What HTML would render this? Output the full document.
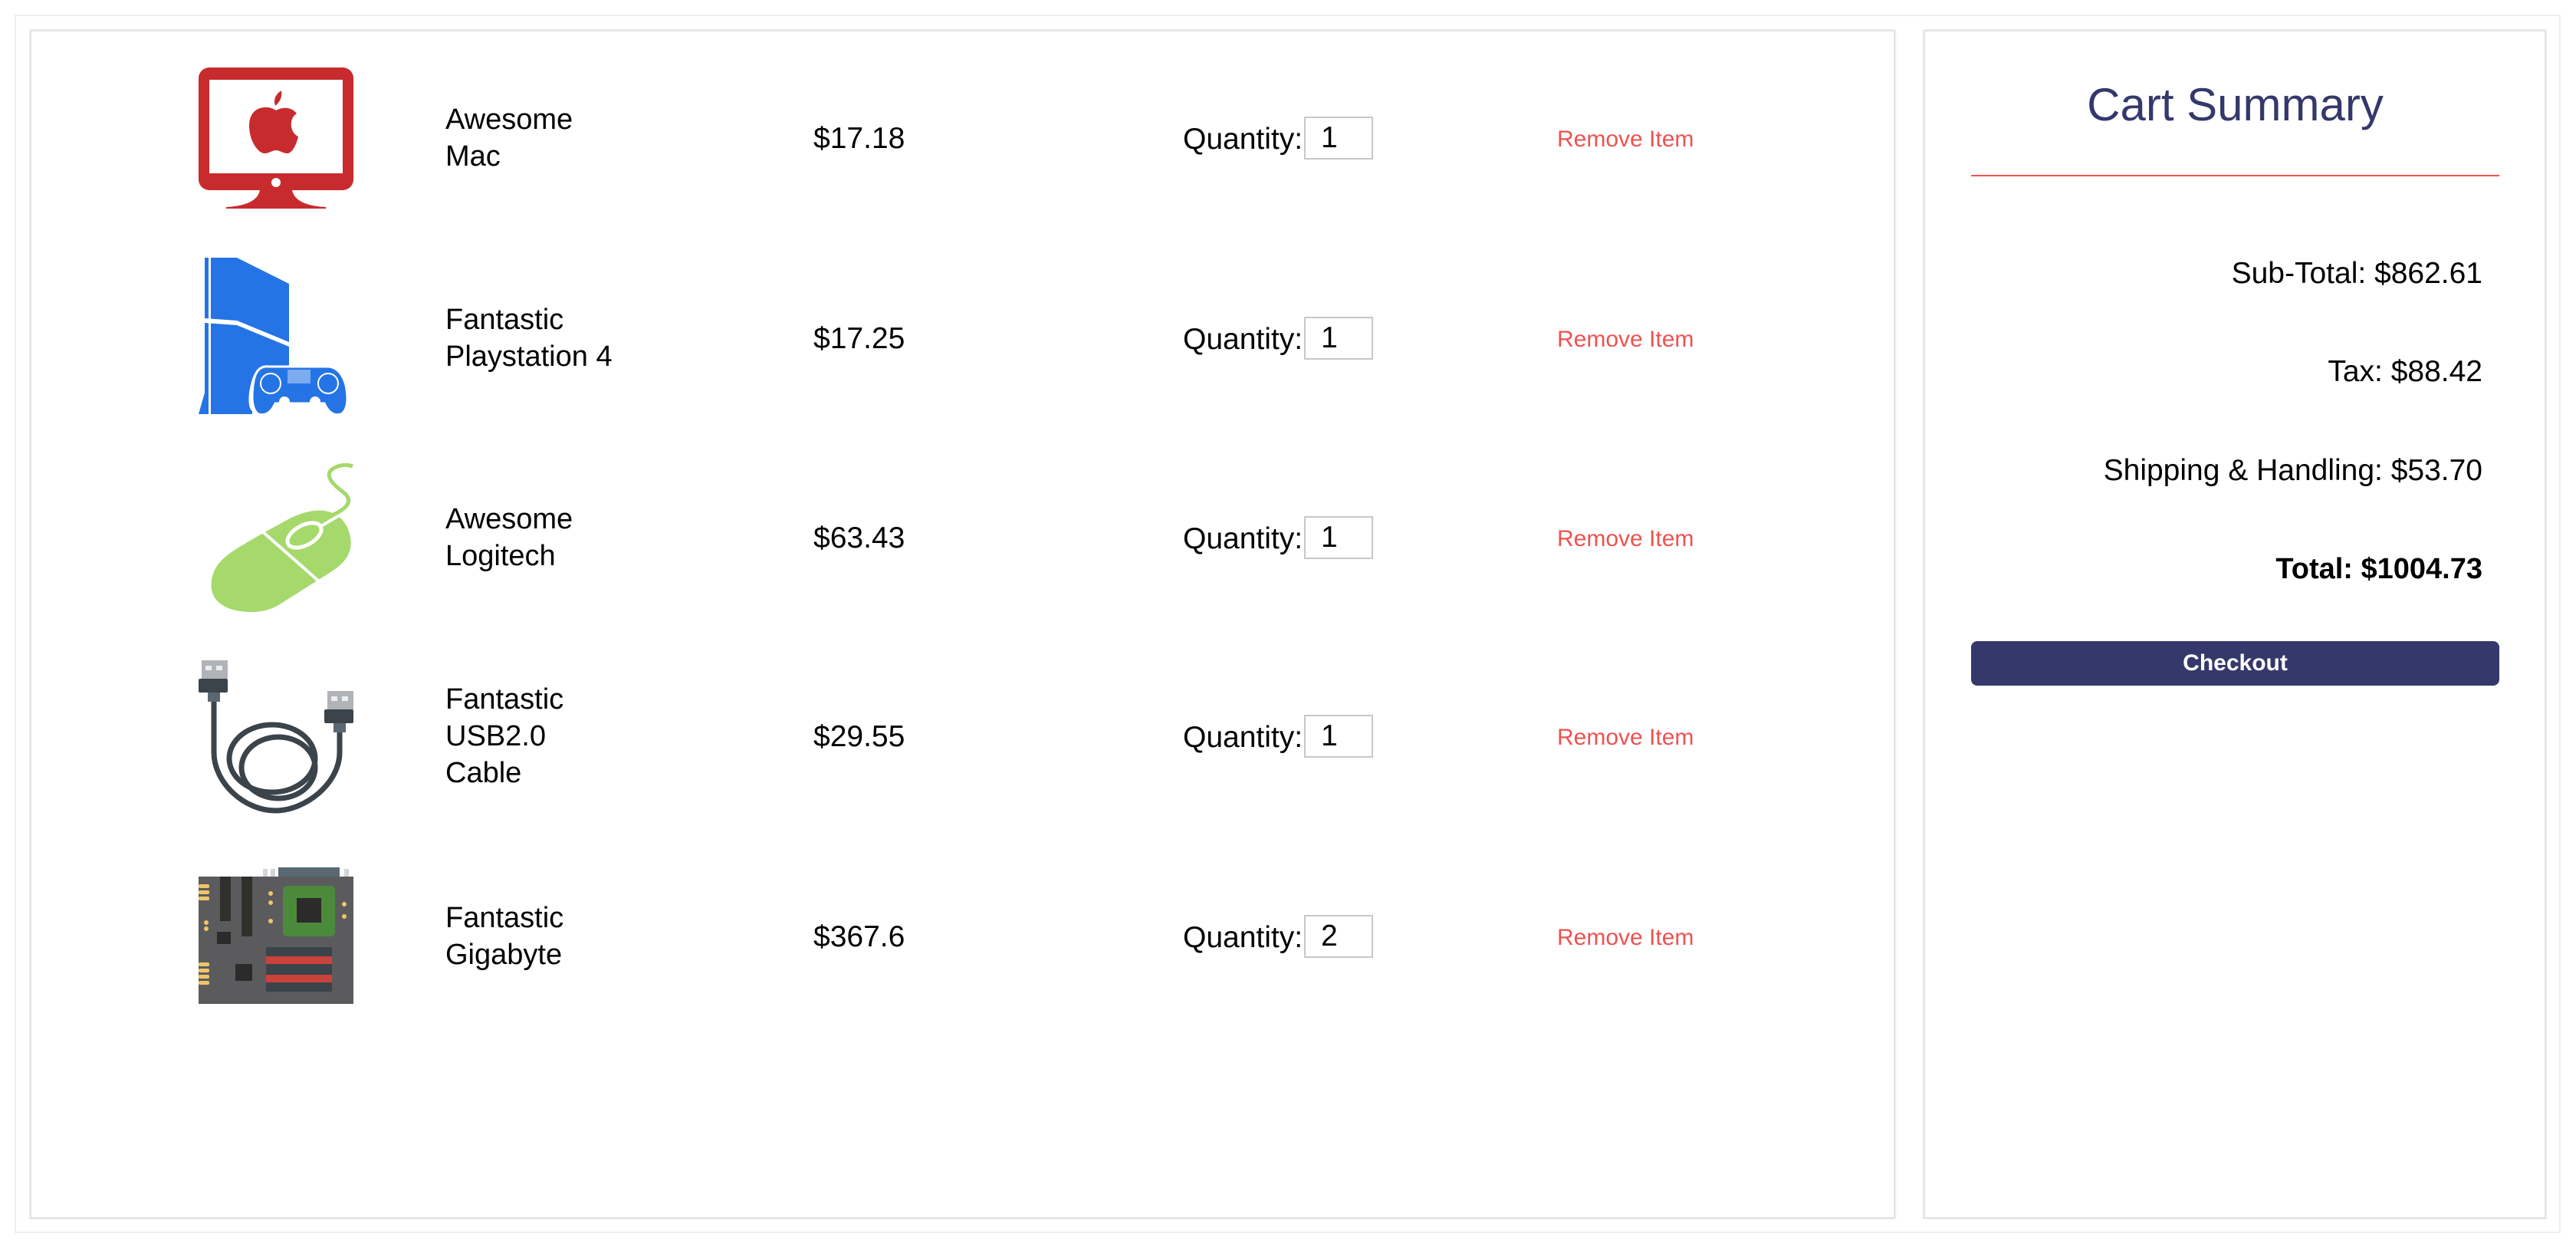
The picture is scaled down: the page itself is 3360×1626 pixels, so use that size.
<!DOCTYPE html>
<html><head><meta charset="utf-8"><style>
*{margin:0;padding:0;box-sizing:border-box}
body{width:3360px;height:1626px;background:#fff;font-family:"Liberation Sans",Arial,sans-serif;position:relative;overflow:hidden;color:#000}
.a{position:absolute}
.box{border:2px solid #e2e2e2}
.name{font-size:38px;line-height:48px;left:581px}
.price{font-size:39px;left:1061px}
.qty{font-size:39px;left:1543px}
.in{left:1701px;width:90px;height:56px;border:2px solid #c8c8c8;font-size:39px;padding-left:20px;line-height:52px}
.rm{left:2031px;font-size:30px;color:#ee5250}
.sum{right:122px;font-size:39px;text-align:right;white-space:nowrap}
</style></head><body>
<div class="a box" style="left:19px;top:19px;width:3321px;height:1589px;border-color:#eee"></div>
<div class="a box" style="left:39px;top:39px;width:2433px;height:1550px;box-shadow:0 0 3px #ddd"></div>
<div class="a box" style="left:2509px;top:39px;width:812px;height:1550px;box-shadow:0 0 3px #ddd"></div>

<!-- Mac -->
<svg class="a" style="left:259px;top:88px" width="202" height="184" viewBox="0 0 202 184">
<rect x="0" y="0" width="202" height="160" rx="14" fill="#c82b2e"/>
<rect x="14" y="16" width="174" height="122" fill="#fff"/>
<circle cx="101" cy="150" r="6" fill="#fff"/>
<path d="M80 160 Q76 180 36 182 L36 184 L166 184 L166 182 Q126 180 122 160Z" fill="#c82b2e"/>
<path d="M100 50 Q96 38 108 30 Q110 42 100 50Z M101 56 C90 48 66 50 66 76 C66 96 78 112 86 112 C92 112 96 108 101 108 C106 108 110 112 116 112 C122 112 128 100 130 90 C118 84 118 66 128 60 C120 50 108 52 101 56Z" fill="#c82b2e"/>
</svg>
<!-- PS4 -->
<svg class="a" style="left:259px;top:336px" width="202" height="204" viewBox="0 0 202 204">
<path d="M8 0 L8 176 L0 204 L70 204 L70 200 Q64 196 66 176 Q70 150 78 146 L118 146 L118 34 L50 0Z" fill="#2574e6"/>
<rect x="13" y="0" width="3" height="204" fill="#fff"/>
<path d="M8 79 L50 82 L118 110 L118 116 L50 88 L8 85Z" fill="#fff"/>
<path d="M72 160 Q76 140 92 142 L170 142 Q186 144 192 166 Q198 196 186 204 Q172 208 164 190 L100 190 Q92 208 78 204 Q66 196 72 160Z" fill="#2574e6" stroke="#fff" stroke-width="3"/>
<circle cx="94" cy="164" r="13" fill="none" stroke="#fff" stroke-width="2"/>
<circle cx="169" cy="164" r="13" fill="none" stroke="#fff" stroke-width="2"/>
<rect x="116" y="146" width="30" height="18" fill="#fff" opacity=".4"/>
<circle cx="112" cy="188" r="7" fill="#fff"/><circle cx="152" cy="188" r="7" fill="#fff"/>
</svg>
<!-- Mouse -->
<svg class="a" style="left:268px;top:598px" width="196" height="204" viewBox="0 0 196 204">
<path d="M60 200 C20 200 0 180 10 150 C18 128 40 118 70 100 L110 78 C150 58 180 68 188 98 C194 120 184 136 160 150 L100 188 C88 196 76 200 60 200Z" fill="#a5d96b"/>
<path d="M64 86 L148 160 M110 112 L178 72" stroke="#fff" stroke-width="4"/>
<ellipse cx="129" cy="100" rx="24" ry="13" transform="rotate(-28 129 100)" fill="#a5d96b" stroke="#fff" stroke-width="5"/>
<path d="M160 76 Q200 60 180 44 Q150 22 168 12 Q180 6 192 10" fill="none" stroke="#a5d96b" stroke-width="5"/>
</svg>
<!-- USB -->
<svg class="a" style="left:259px;top:861px" width="202" height="200" viewBox="0 0 202 200">
<rect x="4" y="0" width="34" height="24" fill="#b0b3b7"/><rect x="9" y="7" width="8" height="6" fill="#eee"/><rect x="23" y="7" width="8" height="6" fill="#eee"/>
<rect x="0" y="24" width="38" height="18" rx="2" fill="#3b434b"/><rect x="12" y="42" width="16" height="12" fill="#5a6874"/>
<rect x="168" y="40" width="34" height="24" fill="#b0b3b7"/><rect x="173" y="47" width="8" height="6" fill="#eee"/><rect x="187" y="47" width="8" height="6" fill="#eee"/>
<rect x="164" y="64" width="38" height="18" rx="2" fill="#3b434b"/><rect x="176" y="82" width="16" height="12" fill="#5a6874"/>
<g fill="none" stroke="#3b434b" stroke-width="7">
<path d="M20 54 L20 120 C20 160 60 196 100 196 C140 196 184 160 184 120 L184 94"/>
<ellipse cx="96" cy="128" rx="56" ry="44"/>
<ellipse cx="104" cy="140" rx="48" ry="40"/>
</g></svg>
<!-- Motherboard -->
<svg class="a" style="left:259px;top:1131px" width="202" height="178" viewBox="0 0 202 178">
<rect x="104" y="0" width="80" height="12" fill="#586875"/><rect x="84" y="2" width="6" height="10" fill="#cfd6da"/><rect x="94" y="2" width="6" height="10" fill="#cfd6da"/><rect x="190" y="2" width="6" height="10" fill="#cfd6da"/>
<rect x="0" y="12" width="202" height="166" fill="#5b5b5d"/>
<rect x="28" y="12" width="14" height="58" fill="#2e302c"/><rect x="56" y="12" width="14" height="78" fill="#2e302c"/>
<rect x="110" y="24" width="68" height="66" rx="6" fill="#4b8a3b"/><rect x="128" y="40" width="32" height="32" fill="#2b2b2b"/>
<rect x="24" y="84" width="18" height="16" fill="#2b2b2b"/>
<rect x="88" y="104" width="86" height="58" fill="#3b434b"/><rect x="88" y="116" width="86" height="10" fill="#c9423a"/><rect x="88" y="140" width="86" height="10" fill="#c9423a"/>
<rect x="48" y="126" width="22" height="22" fill="#2b2b2b"/>
<g fill="#f0c56a"><rect x="0" y="22" width="14" height="5" rx="2"/><rect x="0" y="30" width="14" height="5" rx="2"/><rect x="0" y="38" width="14" height="5" rx="2"/><rect x="0" y="124" width="14" height="5" rx="2"/><rect x="0" y="132" width="14" height="5" rx="2"/><rect x="0" y="140" width="14" height="5" rx="2"/><rect x="0" y="148" width="14" height="5" rx="2"/><circle cx="94" cy="34" r="3"/><circle cx="94" cy="46" r="3"/><circle cx="94" cy="70" r="3"/><circle cx="190" cy="48" r="3"/><circle cx="190" cy="64" r="3"/><circle cx="10" cy="72" r="3"/><circle cx="10" cy="80" r="3"/></g>
</svg>

<!-- rows -->
<div class="a name" style="top:132px">Awesome<br>Mac</div>
<div class="a name" style="top:393px">Fantastic<br>Playstation 4</div>
<div class="a name" style="top:653px">Awesome<br>Logitech</div>
<div class="a name" style="top:888px">Fantastic<br>USB2.0<br>Cable</div>
<div class="a name" style="top:1173px">Fantastic<br>Gigabyte</div>

<div class="a price" style="top:159px">$17.18</div>
<div class="a price" style="top:420px">$17.25</div>
<div class="a price" style="top:680px">$63.43</div>
<div class="a price" style="top:939px">$29.55</div>
<div class="a price" style="top:1200px">$367.6</div>

<div class="a qty" style="top:160px">Quantity:</div><div class="a in" style="top:152px">1</div><div class="a rm" style="top:165px">Remove Item</div>
<div class="a qty" style="top:421px">Quantity:</div><div class="a in" style="top:413px">1</div><div class="a rm" style="top:426px">Remove Item</div>
<div class="a qty" style="top:681px">Quantity:</div><div class="a in" style="top:673px">1</div><div class="a rm" style="top:686px">Remove Item</div>
<div class="a qty" style="top:940px">Quantity:</div><div class="a in" style="top:932px">1</div><div class="a rm" style="top:945px">Remove Item</div>
<div class="a qty" style="top:1201px">Quantity:</div><div class="a in" style="top:1193px">2</div><div class="a rm" style="top:1206px">Remove Item</div>

<!-- summary -->
<div class="a" style="left:2571px;width:689px;top:102px;text-align:center;font-size:60px;color:#35386b">Cart Summary</div>
<div class="a" style="left:2571px;width:689px;top:228px;height:2px;background:#ee5250"></div>
<div class="a sum" style="top:335px">Sub-Total: $862.61</div>
<div class="a sum" style="top:463px">Tax: $88.42</div>
<div class="a sum" style="top:592px">Shipping &amp; Handling: $53.70</div>
<div class="a sum" style="top:721px;font-weight:bold;font-size:38px">Total: $1004.73</div>
<div class="a" style="left:2571px;width:689px;top:836px;height:58px;background:#35386b;border-radius:8px;color:#fff;text-align:center;font-size:30px;line-height:58px;font-weight:bold">Checkout</div>
</body></html>
